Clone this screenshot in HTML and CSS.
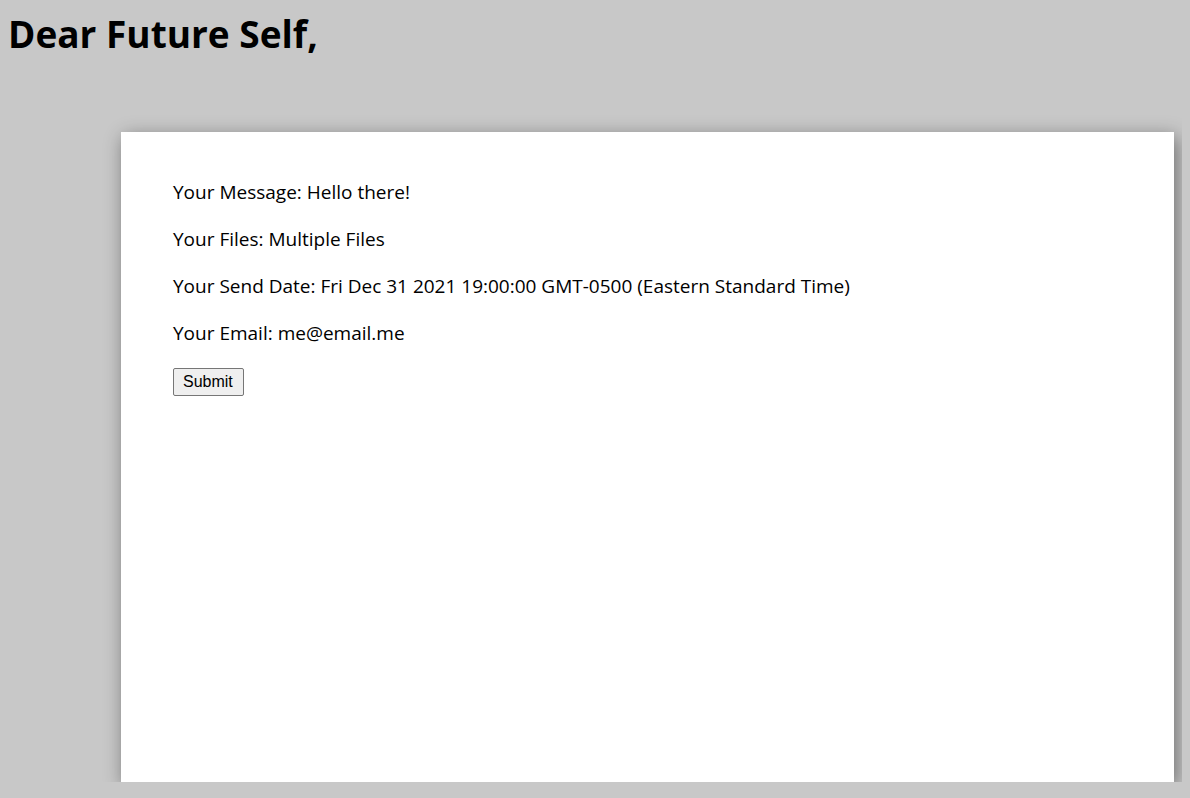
FILE: index.html
```html
<!DOCTYPE html>
<html>
<head>
<meta charset="utf-8">
<link rel="stylesheet" href="styles.css">
</head>
<body>
<h1 class="title">Dear Future Self,</h1>
<div class="card">
  <p class="line">Your Message: Hello there!</p>
  <p class="line">Your Files: Multiple Files</p>
  <p class="line">Your Send Date: Fri Dec 31 2021 19:00:00 GMT-0500 (Eastern Standard Time)</p>
  <p class="line">Your Email: me@email.me</p>
  <button class="submit" type="button">Submit</button>
</div>
</body>
</html>
```

FILE: styles.css
```css
html, body {
  background: #c8c8c8;
}
body {
  margin: 8px;
  font-family: "Open Sans", "Noto Sans", sans-serif;
  color: #000;
}
.title {
  margin: 0;
  font-size: 37px;
  line-height: 52px;
  font-weight: 700;
}
.card {
  margin: 72px 0 0 113px;
  width: 1053px;
  height: 650px;
  box-sizing: border-box;
  background: #fff;
  padding: 48px 52px;
  box-shadow: 3px 5px 18px rgba(0, 0, 0, 0.45);
}
.line {
  margin: 0 0 23px;
  font-size: 19px;
  line-height: 24px;
}
.submit {
  display: block;
  margin-top: 0;
  font-family: "Liberation Sans", Arial, sans-serif;
  font-size: 16px;
  line-height: 20px;
  padding: 3px 10px 3px 9px;
  background: #efefef;
  border: 1px solid #767676;
  border-radius: 2px;
  color: #000;
}
```
